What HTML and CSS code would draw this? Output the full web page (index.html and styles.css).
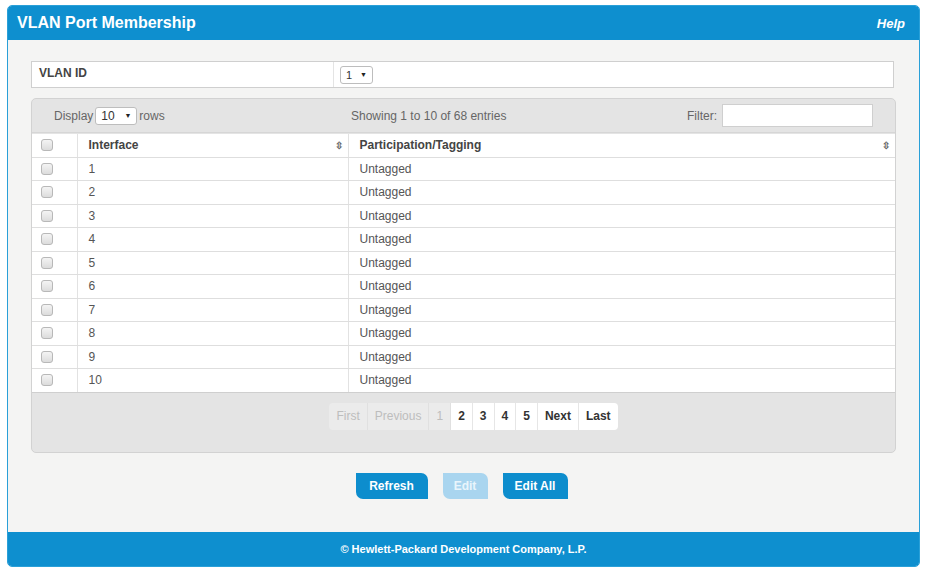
FILE: index.html
```html
<!DOCTYPE html>
<html>
<head>
<meta charset="utf-8">
<link rel="stylesheet" href="styles.css">
</head>
<body>
<div class="panel">
  <div class="panel-head">
    <span class="title">VLAN Port Membership</span>
    <span class="help">Help</span>
  </div>
  <div class="panel-body">
    <div class="vlan-row">
      <div class="vlan-label">VLAN ID</div>
      <div class="vlan-value"><span class="sel sel-vlan">1 <span class="caret">▼</span></span></div>
    </div>
    <div class="grid-wrap">
      <div class="toolbar">
        <div class="tb-left">Display <span class="sel sel-rows">10 <span class="caret">▼</span></span> rows</div>
        <div class="tb-mid">Showing 1 to 10 of 68 entries</div>
        <div class="tb-right">Filter: <span class="filter"></span></div>
      </div>
      <table class="grid">
        <thead>
          <tr>
            <th class="c-cb"><span class="cb"></span></th>
            <th class="c-if"><div class="th-in">Interface <span class="sort">⇳</span></div></th>
            <th class="c-pt"><div class="th-in">Participation/Tagging <span class="sort">⇳</span></div></th>
          </tr>
        </thead>
        <tbody>
          <tr><td class="c-cb"><span class="cb"></span></td><td>1</td><td>Untagged</td></tr>
          <tr><td class="c-cb"><span class="cb"></span></td><td>2</td><td>Untagged</td></tr>
          <tr><td class="c-cb"><span class="cb"></span></td><td>3</td><td>Untagged</td></tr>
          <tr><td class="c-cb"><span class="cb"></span></td><td>4</td><td>Untagged</td></tr>
          <tr><td class="c-cb"><span class="cb"></span></td><td>5</td><td>Untagged</td></tr>
          <tr><td class="c-cb"><span class="cb"></span></td><td>6</td><td>Untagged</td></tr>
          <tr><td class="c-cb"><span class="cb"></span></td><td>7</td><td>Untagged</td></tr>
          <tr><td class="c-cb"><span class="cb"></span></td><td>8</td><td>Untagged</td></tr>
          <tr><td class="c-cb"><span class="cb"></span></td><td>9</td><td>Untagged</td></tr>
          <tr><td class="c-cb"><span class="cb"></span></td><td>10</td><td>Untagged</td></tr>
        </tbody>
      </table>
      <div class="pager-row">
        <div class="pager">
          <span class="pg dis pg-first">First</span>
          <span class="pg dis">Previous</span>
          <span class="pg dis num">1</span>
          <span class="pg num">2</span>
          <span class="pg num">3</span>
          <span class="pg num">4</span>
          <span class="pg num">5</span>
          <span class="pg">Next</span>
          <span class="pg pg-last">Last</span>
        </div>
      </div>
    </div>
    <div class="actions">
      <span class="btn btn-refresh">Refresh</span>
      <span class="btn btn-edit disabled">Edit</span>
      <span class="btn btn-editall">Edit All</span>
    </div>
  </div>
  <div class="panel-foot">© Hewlett-Packard Development Company, L.P.</div>
</div>
</body>
</html>
```

FILE: styles.css
```css
* { box-sizing: border-box; }
html, body { margin: 0; padding: 0; background: #ffffff; }
body {
  font-family: "Liberation Sans", Arial, sans-serif;
  font-size: 12px;
  color: #444;
}
.panel {
  margin: 5px 6px 0 7px;
  width: 913px;
  border: 1px solid #2aa0d8;
  border-radius: 5px;
  overflow: hidden;
  background: #f5f5f5;
}
.panel-head {
  height: 34px;
  background: #0e8fcf;
  display: flex;
  align-items: center;
  justify-content: space-between;
  padding: 0 14px 0 9px;
}
.title {
  color: #fff;
  font-weight: bold;
  font-size: 16px;
}
.help {
  color: #fff;
  font-weight: bold;
  font-style: italic;
  font-size: 13px;
}
.panel-body {
  padding: 21px 25px 33px 23px;
  background: #f4f4f3;
}
.vlan-row {
  height: 27px;
  display: flex;
  align-items: stretch;
  background: #fff;
  border: 1px solid #cfcfcf;
}
.vlan-label {
  width: 302px;
  border-right: 1px solid #e4e4e4;
  padding: 0 0 4px 7px;
  display: flex;
  align-items: center;
  font-weight: bold;
  color: #444;
}
.vlan-value {
  padding: 0 0 0 6px;
  display: flex;
  align-items: center;
}
.sel {
  display: inline-flex;
  align-items: center;
  background: #fff;
  border: 1px solid #bdbdbd;
  border-radius: 3px;
  height: 18px;
  padding: 0 5px;
  color: #333;
  font-size: 11px;
}
.sel-vlan { width: 33px; justify-content: space-between; }
.sel-rows { width: 42px; justify-content: space-between; margin: 0 2px; font-size: 12px; }
.caret { font-size: 7px; color: #222; }
.grid-wrap {
  margin-top: 10px;
  background: #e4e4e4;
  border: 1px solid #d2d2d2;
  border-radius: 5px;
  overflow: hidden;
  width: 865px;
}
.toolbar {
  height: 34px;
  display: flex;
  align-items: center;
  padding: 0 22px 0 22px;
  color: #666;
  border-bottom: 1px solid #d6d6d6;
}
.tb-left { width: 297px; display: flex; align-items: center; }
.tb-mid { flex: 1; }
.tb-right { display: flex; align-items: center; gap: 5px; }
.filter {
  display: inline-block;
  width: 151px;
  height: 23px;
  background: #fff;
  border: 1px solid #cfcfcf;
}
.grid {
  width: 100%;
  border-collapse: collapse;
  background: #fff;
  margin-top: 1px;
}
.grid th, .grid td {
  height: 23.5px;
  padding: 0 0 0 11px;
  border-bottom: 1px solid #dedede;
  border-left: 1px solid #e2e2e2;
  text-align: left;
  vertical-align: middle;
  font-weight: normal;
  color: #555;
}
.grid th {
  font-weight: bold;
  color: #444;
  height: 23px;
}
.grid tr > :first-child { border-left: none; }
.grid tbody tr:last-child td { border-bottom: 1px solid #cfcfcf; }
.c-cb { width: 45px; padding: 0 0 0 9px !important; }
.c-if { width: 271px; }
.th-in { display: flex; justify-content: space-between; align-items: center; padding-right: 5px; }
.sort { font-weight: bold; font-size: 10px; color: #666; }
.cb {
  display: block;
  width: 12px;
  height: 12px;
  border: 1px solid #b8b8b8;
  border-radius: 3px;
  background: linear-gradient(#f4f4f4, #dcdcdc);
}
.pager-row {
  height: 59px;
  display: flex;
  justify-content: center;
  align-items: flex-start;
  padding-top: 10px;
}
.pager {
  display: flex;
  height: 27px;
  margin-left: 20px;
}
.pg {
  display: flex;
  align-items: center;
  padding: 0 7px;
  background: #fff;
  color: #333;
  font-weight: bold;
  border-right: 1px solid #e6e6e6;
  font-size: 12px;
}
.pg.dis { background: #ebebeb; color: #bdbdbd; font-weight: normal; border-right: 1px solid #e0e0e0; }
.pg-first { border-radius: 4px 0 0 4px; }
.pg-last { border-radius: 0 4px 4px 0; border-right: none; }
.actions {
  display: flex;
  justify-content: center;
  gap: 15px;
  margin-top: 20px;
  padding-right: 2px;
}
.btn {
  height: 26px;
  display: flex;
  align-items: center;
  justify-content: center;
  background: #0d8dcd;
  color: #fff;
  font-weight: bold;
  border-radius: 0 7px 0 7px;
  font-size: 12px;
}
.btn-refresh { width: 72px; }
.btn-edit { width: 45px; }
.btn-editall { width: 65px; }
.btn.disabled { background: #a9d5ef; color: #e9f5fc; }
.panel-foot {
  height: 34px;
  background: #0e8fcf;
  color: #fff;
  font-weight: bold;
  font-size: 11px;
  display: flex;
  align-items: center;
  justify-content: center;
}
```
